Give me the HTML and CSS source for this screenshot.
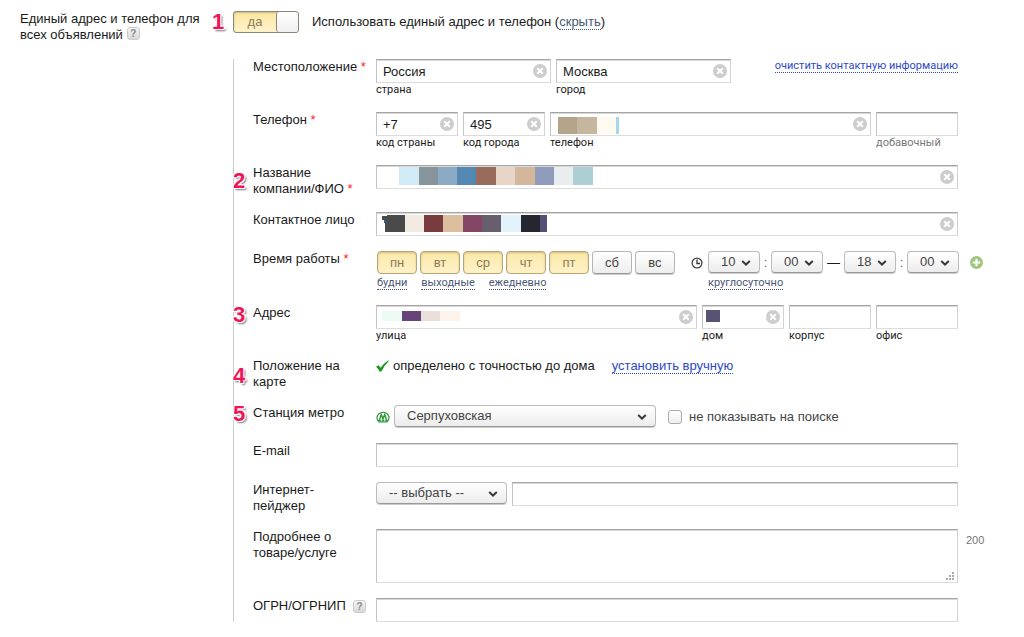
FILE: index.html
```html
<!DOCTYPE html>
<html lang="ru">
<head>
<meta charset="utf-8">
<title>Единый адрес и телефон</title>
<link rel="stylesheet" href="styles.css">
</head>
<body>
<svg class="defs" aria-hidden="true">
  <symbol id="clear" viewBox="0 0 14 14"><circle cx="7" cy="7" r="7" fill="#cdcdcd"/><path d="M4.2 4.2l5.6 5.6M9.800 4.200l-5.600 5.600" stroke="#fff" stroke-width="2"/></symbol>
  <symbol id="chevron" viewBox="0 0 10 6"><path d="M1.200 1l3.800 3.600L8.800 1" fill="none" stroke="#3a3a3a" stroke-width="2"/></symbol>
</svg>
<form class="page">
  <header class="head">
    <div class="head-label"><div>Единый адрес и телефон для</div><div class="head-line"><span>всех объявлений</span><button type="button" class="help" aria-label="Справка">?</button></div><span class="mark mark-1">1</span></div>
    <div class="head-main">
      <button type="button" class="switch" aria-pressed="true"><span class="switch-text">да</span><span class="switch-knob"></span></button>
      <span>Использовать единый адрес и телефон (<a href="#" class="pseudo">скрыть</a>)</span>
    </div>
  </header>

  <main class="fields">
    <div class="row">
      <label class="name" for="country">Местоположение <i class="req">*</i></label>
      <div class="line">
        <div class="cell place"><div class="box"><input id="country" class="input" type="text" value="Россия"><button type="button" class="clear" aria-label="Очистить"><svg><use href="#clear"/></svg></button></div><label class="hint" for="country">страна</label></div>
        <div class="cell place"><div class="box"><input id="city" class="input" type="text" value="Москва"><button type="button" class="clear" aria-label="Очистить"><svg><use href="#clear"/></svg></button></div><label class="hint" for="city">город</label></div>
        <a href="#" class="link small reset">очистить контактную информацию</a>
      </div>
    </div>

    <div class="row">
      <label class="name" for="phone">Телефон <i class="req">*</i></label>
      <div class="line">
        <div class="cell short"><div class="box"><input id="ccode" class="input" type="text" value="+7"><button type="button" class="clear" aria-label="Очистить"><svg><use href="#clear"/></svg></button></div><label class="hint" for="ccode">код страны</label></div>
        <div class="cell short"><div class="box"><input id="acode" class="input" type="text" value="495"><button type="button" class="clear" aria-label="Очистить"><svg><use href="#clear"/></svg></button></div><label class="hint" for="acode">код города</label></div>
        <div class="cell wide"><div class="box"><input id="phone" class="input" type="text">
          <svg class="mosaic" width="240" height="24"><path fill="#b3a48a" d="M8 5h19v17H8z"/><path fill="#c5b79f" d="M27 5h20v17H27z"/><path fill="#fefaf0" d="M47 5h19v17H47z"/><path fill="#a8d5ec" d="M66 5h3v17h-3z"/></svg>
          <button type="button" class="clear" aria-label="Очистить"><svg><use href="#clear"/></svg></button></div><label class="hint" for="phone">телефон</label></div>
        <div class="cell short"><div class="box"><input id="ext" class="input" type="text"></div><label class="hint pale" for="ext">добавочный</label></div>
      </div>
    </div>

    <div class="row">
      <label class="name" for="company">Название компании/ФИО <i class="req">*</i></label>
      <span class="mark mark-2">2</span>
      <div class="box"><input id="company" class="input" type="text">
        <svg class="mosaic" width="240" height="24"><path fill="#fff" d="M2 2h21v18H2z"/><path fill="#d3ebf6" d="M23 2h20v18H23z"/><path fill="#86959b" d="M43 2h19v18H43z"/><path fill="#8caac4" d="M62 2h19v18H62z"/><path fill="#5388b3" d="M81 2h19v18H81z"/><path fill="#996b5b" d="M100 2h20v18h-20z"/><path fill="#e7d6c7" d="M120 2h19v18h-19z"/><path fill="#d3b79d" d="M139 2h20v18h-20z"/><path fill="#8f9bbb" d="M159 2h19v18h-19z"/><path fill="#e7eeed" d="M178 2h19v18h-19z"/><path fill="#aeced6" d="M197 2h20v18h-20z"/></svg>
        <button type="button" class="clear" aria-label="Очистить"><svg><use href="#clear"/></svg></button></div>
    </div>

    <div class="row">
      <label class="name" for="person">Контактное лицо</label>
      <div class="box"><input id="person" class="input" type="text">
        <svg class="mosaic" width="240" height="24"><path fill="#4a4a4a" d="M6 4h5v-1h18v17H9v-9H8V8H6z"/><path fill="#2e5f8a" d="M8 8h2v3H8z"/><path fill="#f3eae2" d="M29 3h19v17H29z"/><path fill="#783c3f" d="M48 3h19v17H48z"/><path fill="#dcbf9f" d="M67 3h20v17H67z"/><path fill="#844665" d="M87 3h19v17H87z"/><path fill="#675f6d" d="M106 3h19v17h-19z"/><path fill="#e3f3fb" d="M125 3h20v17h-20z"/><path fill="#24272f" d="M145 3h19v17h-19z"/><path fill="#544f73" d="M164 3h7v17h-7z"/></svg>
        <button type="button" class="clear" aria-label="Очистить"><svg><use href="#clear"/></svg></button></div>
    </div>

    <div class="row row-time">
      <div class="name">Время работы <i class="req">*</i></div>
      <div class="time">
        <div>
          <div class="days">
            <button type="button" class="day on" aria-pressed="true">пн</button><button type="button" class="day on" aria-pressed="true">вт</button><button type="button" class="day on" aria-pressed="true">ср</button><button type="button" class="day on" aria-pressed="true">чт</button><button type="button" class="day on" aria-pressed="true">пт</button><button type="button" class="day">сб</button><button type="button" class="day">вс</button>
          </div>
          <div class="presets"><a href="#" class="pseudo small">будни</a><a href="#" class="pseudo small">выходные</a><a href="#" class="pseudo small">ежедневно</a></div>
        </div>
        <svg class="clock" viewBox="0 0 12 12"><circle cx="6" cy="6" r="4.900" fill="none" stroke="#444" stroke-width="1.300"/><path d="M6 2.500V6.500H9" fill="none" stroke="#333" stroke-width="1.300"/></svg>
        <div>
          <div class="hours">
            <span class="pick"><select class="select" aria-label="Начало, часы"><option>10</option></select><svg class="chev"><use href="#chevron"/></svg></span>
            <span class="colon">:</span>
            <span class="pick"><select class="select" aria-label="Начало, минуты"><option>00</option></select><svg class="chev"><use href="#chevron"/></svg></span>
            <span class="dash">—</span>
            <span class="pick"><select class="select" aria-label="Конец, часы"><option>18</option></select><svg class="chev"><use href="#chevron"/></svg></span>
            <span class="colon">:</span>
            <span class="pick"><select class="select" aria-label="Конец, минуты"><option>00</option></select><svg class="chev"><use href="#chevron"/></svg></span>
          </div>
          <div class="allday"><a href="#" class="pseudo small">круглосуточно</a></div>
        </div>
        <button type="button" class="add" aria-label="Добавить"><svg viewBox="0 0 12 12"><circle cx="6" cy="6" r="6" fill="#9cc67c"/><path d="M6 2.500v7M2.500 6h7" stroke="#fff" stroke-width="2"/></svg></button>
      </div>
    </div>

    <div class="row">
      <label class="name" for="street">Адрес</label>
      <span class="mark mark-3">3</span>
      <div class="line">
        <div class="cell wide"><div class="box"><input id="street" class="input" type="text">
          <svg class="mosaic" width="240" height="24"><path fill="#edfcf3" d="M6 6h20v10H6z"/><path fill="#66447a" d="M26 6h19v10H26z"/><path fill="#e8dfdb" d="M45 6h19v10H45z"/><path fill="#fdf3ea" d="M64 6h20v10H64z"/></svg>
          <button type="button" class="clear" aria-label="Очистить"><svg><use href="#clear"/></svg></button></div><label class="hint" for="street">улица</label></div>
        <div class="cell short"><div class="box"><input id="house" class="input" type="text">
          <svg class="mosaic" width="40" height="24"><path fill="#585275" d="M4 5h14v12H4z"/></svg>
          <button type="button" class="clear" aria-label="Очистить"><svg><use href="#clear"/></svg></button></div><label class="hint" for="house">дом</label></div>
        <div class="cell short"><div class="box"><input id="block" class="input" type="text"></div><label class="hint" for="block">корпус</label></div>
        <div class="cell short"><div class="box"><input id="office" class="input" type="text"></div><label class="hint" for="office">офис</label></div>
      </div>
    </div>

    <div class="row">
      <div class="name">Положение на карте</div>
      <span class="mark mark-4">4</span>
      <div class="status"><svg class="tick" viewBox="0 0 13 12"><path d="M0 6.500L2.800 5.200 4.500 7.800Q8 2.500 12.600 0.200L12.800 1Q8.500 5 5.500 11.600H3.500Q2 8.500 0 6.500z" fill="#1c9a1c"/></svg><span>определено с точностью до дома</span><a href="#" class="link manual">установить вручную</a></div>
    </div>

    <div class="row">
      <label class="name" for="metro">Станция метро</label>
      <span class="mark mark-5">5</span>
      <div class="metro">
        <svg class="metro-icon" viewBox="0 0 14 12"><path d="M2.800 10.900A6 5.600 0 1 1 11.200 10.900z" fill="#fff" stroke="#2f9b3a" stroke-width="1.200"/><path d="M2 9.600h2.700M5.700 9.600h2.600M9.300 9.600h2.700M3.400 9.400L5.200 3.600 7 7.600 8.800 3.600l1.800 5.800" fill="none" stroke="#2f9b3a" stroke-width="1.500"/></svg>
        <span class="pick station"><select id="metro" class="select"><option>Серпуховская</option></select><svg class="chev"><use href="#chevron"/></svg></span>
        <label class="check"><input type="checkbox" class="tickbox">не показывать на поиске</label>
      </div>
    </div>

    <div class="row">
      <label class="name" for="email">E-mail</label>
      <div class="box"><input id="email" class="input" type="email"></div>
    </div>

    <div class="row">
      <label class="name" for="pager">Интернет-<br>пейджер</label>
      <div class="line">
        <span class="pick messenger"><select class="select" aria-label="Тип пейджера"><option>-- выбрать --</option></select><svg class="chev"><use href="#chevron"/></svg></span>
        <div class="box wide"><input id="pager" class="input" type="text"></div>
      </div>
    </div>

    <div class="row">
      <label class="name" for="details">Подробнее о товаре/услуге</label>
      <div class="area-box"><textarea id="details" class="input area"></textarea>
        <svg class="grip" viewBox="0 0 8 8" fill="#aaa"><path d="M6 0h2v2H6zM3 3h2v2H3zM6 3h2v2H6zM0 6h2v2H0zM3 6h2v2H3zM6 6h2v2H6z"/></svg></div>
      <span class="count">200</span>
    </div>

    <div class="row">
      <div class="name name-help"><label for="ogrn">ОГРН/ОГРНИП</label><button type="button" class="help" aria-label="Справка">?</button></div>
      <div class="box"><input id="ogrn" class="input" type="text"></div>
    </div>
  </main>
</form>
</body>
</html>
```
FILE: styles.css
```css
* { box-sizing: border-box; }
body { margin: 0; background: #fff; color: #1a1a1a; font: 13px/16px "Liberation Sans", Arial, sans-serif; }
button, input, select, textarea { font: inherit; color: inherit; margin: 0; }
button { padding: 0; cursor: pointer; }
.defs { position: absolute; width: 0; height: 0; }
.page { padding: 11px 0 0 20px; }

.head { display: grid; grid-template-columns: 213px 1fr; padding-bottom: 16px; }
.head-label { position: relative; }
.head-line { display: flex; align-items: flex-start; gap: 4px; }
.head-main { display: flex; align-items: center; gap: 13px; height: 22px; }
.help { width: 13px; height: 13px; border: 1px solid #ccc; border-radius: 3px; background: linear-gradient(#f4f4f4, #d8d8d8); color: #888; font-size: 10px; line-height: 11px; font-weight: bold; }

.switch { display: flex; width: 66px; height: 22px; border: 1px solid #8d8777; border-radius: 3px; background: linear-gradient(#fbe6a0, #fff3cc); box-shadow: inset 0 1px 2px #c9b98a; color: #8a7c58; }
.switch-text { flex: 1; line-height: 20px; }
.switch-knob { width: 22px; height: 20px; border-left: 1px solid #8d8777; border-radius: 3px; background: linear-gradient(#fff, #f0f0f0); }

.link { color: #2c49c9; text-decoration: none; border-bottom: 1px dotted #2c49c9; }
.pseudo { color: #4a5878; text-decoration: none; border-bottom: 1px dotted #4a5878; }
.small { font: 11px/13px Roboto, "Liberation Sans", sans-serif; }
.req { color: #f22; font-style: normal; }

.fields { display: flex; flex-direction: column; gap: 15px; margin-left: 213px; padding-left: 19px; border-left: 1px solid #ccc; }
.row { position: relative; display: grid; grid-template-columns: 123px minmax(0, 1fr) 66px; align-items: start; }
.name { grid-column: 1; padding-right: 5px; }
.name-help { display: flex; justify-content: space-between; align-items: center; padding-right: 10px; }
.line { display: flex; align-items: flex-start; gap: 5px; }
.cell { display: flex; flex-direction: column; }
.place { width: 175px; }
.short { width: 82px; }
.wide { flex: 1; }
.reset { margin-left: auto; }

.box { position: relative; display: flex; height: 24px; }
.input { width: 100%; height: 24px; padding: 0 6px; border: 1px solid; border-color: #a5a5a5 #d2d2d2 #dcdcdc #c4c4c4; border-radius: 0; background: #fff; box-shadow: inset 0 1px 0 #d8d8d8; outline: 0; }
.hint { font: 11px/14px Roboto, "Liberation Sans", sans-serif; }
.pale { color: #777; }
.clear { position: absolute; right: 4px; top: 5px; width: 14px; height: 14px; border: 0; background: none; }
.clear svg { display: block; width: 14px; height: 14px; }
.mosaic { position: absolute; left: 0; top: 0; pointer-events: none; }

.mark { position: absolute; left: -20px; color: #f0145a; font-size: 22px; line-height: 24px; font-weight: bold; text-shadow: 1px 1px 0 #fff, -1px -1px 0 #fff, 1px -1px 0 #fff, -1px 1px 0 #fff, 2px 2px 2px #777; }
.mark-1 { left: 192px; top: -1px; }
.mark-2 { top: 4px; }
.mark-3 { top: -2px; }
.mark-4 { top: 6px; }
.mark-5 { top: -3px; }

.time { grid-column: 2 / 4; display: flex; padding-left: 1px; }
.days { display: flex; gap: 3px; }
.day { width: 40px; height: 23px; border: 1px solid #b5b5b5; border-bottom-color: #999; border-radius: 4px; background: linear-gradient(#fff, #eee); box-shadow: 0 1px 0 #ccc; color: #444; }
.on { border-color: #b8a677; background: linear-gradient(#fbe8a8, #fff2c8); box-shadow: inset 0 1px 2px #d1bd84; color: #8a7c58; }
.presets, .allday { display: flex; height: 16px; align-items: flex-end; }
.presets { gap: 14px; }
.clock { width: 12px; height: 12px; margin: 6px 5px 0 16px; }
.hours { display: flex; align-items: center; }
.colon { width: 11px; text-align: center; color: #666; }
.dash { width: 21px; text-align: center; }
.add { width: 13px; height: 13px; margin: 5px 0 0 11px; border: 0; background: none; }
.add svg { display: block; width: 13px; height: 13px; }

.pick { position: relative; display: block; width: 52px; height: 23px; }
.select { display: block; width: 100%; height: 22px; padding: 0 12px; appearance: none; border: 1px solid #bbb; border-bottom-color: #999; border-radius: 4px; background: linear-gradient(#fff, #ececec); box-shadow: 0 1px 0 #ccc; color: #444; }
.chev { position: absolute; right: 9px; top: 9px; width: 10px; height: 6px; pointer-events: none; }
.station { width: 262px; }
.messenger { width: 131px; }

.status { display: flex; align-items: flex-start; gap: 4px; }
.tick { width: 13px; height: 12px; margin-top: 2px; }
.manual { margin-left: 13px; line-height: 15px; }
.metro { display: flex; align-items: center; }
.metro-icon { width: 14px; height: 12px; margin-right: 4px; }
.check { display: flex; align-items: center; gap: 7px; margin-left: 12px; color: #444; }
.tickbox { appearance: none; width: 14px; height: 14px; border: 1px solid #aaa; border-radius: 3px; background: linear-gradient(#fff, #eee); }

.area-box { position: relative; display: flex; }
.area { height: 54px; resize: none; }
.grip { position: absolute; right: 4px; bottom: 3px; width: 8px; height: 8px; }
.count { padding: 3px 0 0 8px; color: #777; font-size: 11px; }
```
